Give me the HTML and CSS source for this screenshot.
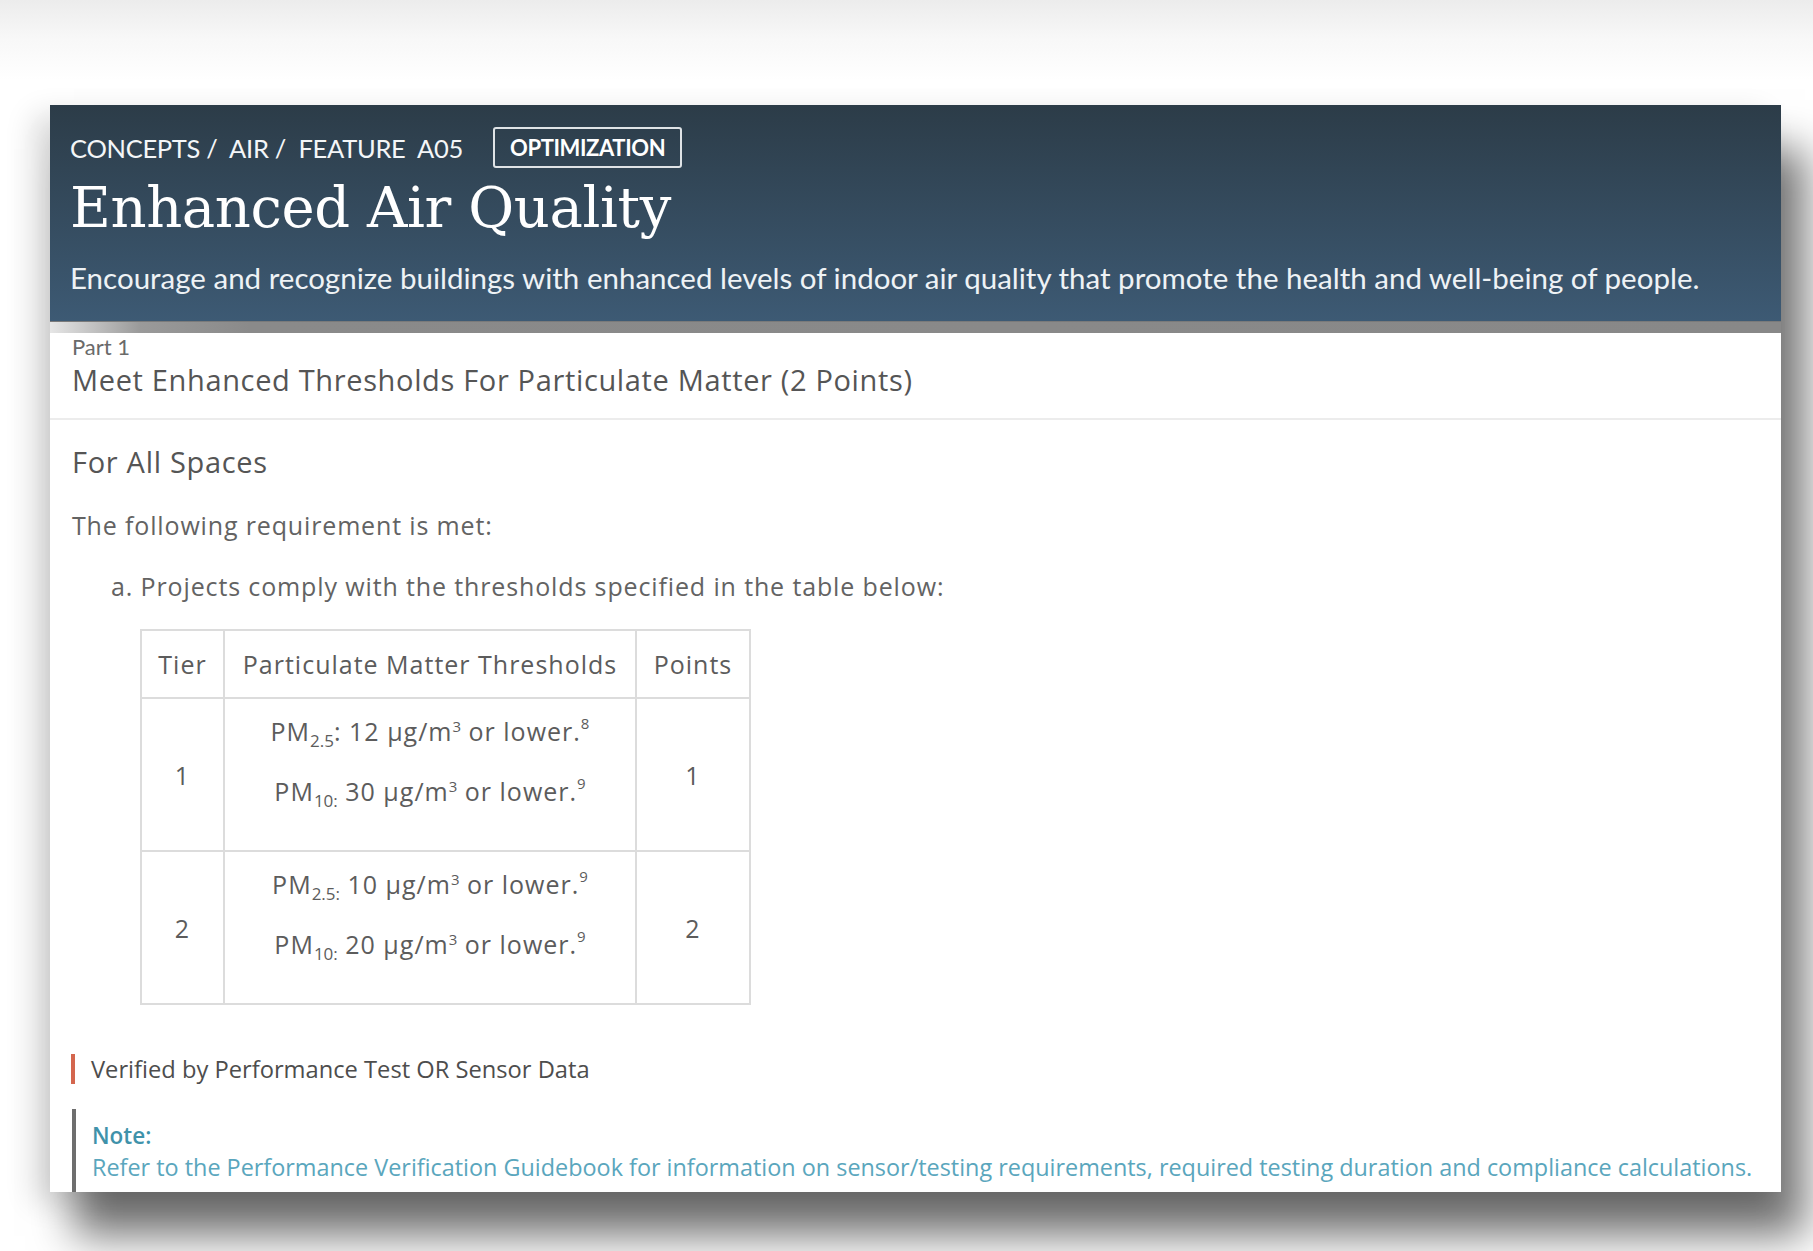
FILE: index.html
```html
<!DOCTYPE html>
<html lang="en">
<head>
<meta charset="utf-8">
<title>Enhanced Air Quality</title>
<link rel="stylesheet" href="styles.css">
</head>
<body>
<div class="page">
  <div class="card">
    <header class="hero">
      <div class="crumbs">
        <span class="crumb-text">CONCEPTS /&nbsp; AIR /&nbsp; FEATURE&nbsp; A05</span>
        <span class="badge">OPTIMIZATION</span>
      </div>
      <h1 class="title">Enhanced Air Quality</h1>
      <p class="intro">Encourage and recognize buildings with enhanced levels of indoor air quality that promote the health and well-being of people.</p>
    </header>
    <div class="band"></div>
    <section class="part">
      <div class="part-label">Part 1</div>
      <h2 class="part-title">Meet Enhanced Thresholds For Particulate Matter (2 Points)</h2>
    </section>
    <section class="body">
      <h3 class="space-title">For All Spaces</h3>
      <p class="req">The following requirement is met:</p>
      <p class="item">a. Projects comply with the thresholds specified in the table below:</p>
      <table class="thr">
        <thead>
          <tr><th class="c-tier">Tier</th><th class="c-pm">Particulate Matter Thresholds</th><th class="c-pts">Points</th></tr>
        </thead>
        <tbody>
          <tr class="r1">
            <td>1</td>
            <td class="pm">
              <p>PM<sub>2.5</sub>: 12 µg/m<sup class="cube">3</sup> or lower.<sup class="fn">8</sup></p>
              <p>PM<sub>10:</sub> 30 µg/m<sup class="cube">3</sup> or lower.<sup class="fn">9</sup></p>
            </td>
            <td>1</td>
          </tr>
          <tr class="r2">
            <td>2</td>
            <td class="pm">
              <p>PM<sub>2.5:</sub> 10 µg/m<sup class="cube">3</sup> or lower.<sup class="fn">9</sup></p>
              <p>PM<sub>10:</sub> 20 µg/m<sup class="cube">3</sup> or lower.<sup class="fn">9</sup></p>
            </td>
            <td>2</td>
          </tr>
        </tbody>
      </table>
      <div class="verified">Verified by Performance Test OR Sensor Data</div>
      <div class="note">
        <div class="note-head">Note:</div>
        <div class="note-text">Refer to the Performance Verification Guidebook for information on sensor/testing requirements, required testing duration and compliance calculations.</div>
      </div>
    </section>
  </div>
</div>
</body>
</html>
```

FILE: styles.css
```css
html, body {
  margin: 0;
  padding: 0;
}
body {
  width: 1813px;
  height: 1251px;
  overflow: hidden;
  background: linear-gradient(#ececec 0px, #f8f8f8 40px, #ffffff 80px);
  font-family: "Open Sans", "Lato", sans-serif;
}
.page {
  padding: 105px 0 0 50px;
}
.card {
  width: 1731px;
  height: 1087px;
  overflow: hidden;
  background: #ffffff;
  box-shadow: 24px 44px 40px rgba(0, 0, 0, 0.55), -16px 10px 28px rgba(0, 0, 0, 0.14);
}
.hero {
  height: 216px;
  box-sizing: border-box;
  padding: 22px 20px 0 20px;
  background: linear-gradient(#2c3c48, #3d5a74);
  color: #ffffff;
  font-family: "Lato", "Open Sans", sans-serif;
}
.crumbs {
  display: flex;
  align-items: center;
  height: 41px;
}
.crumb-text {
  font-size: 25.5px;
  letter-spacing: -0.3px;
  color: #f4f6f8;
}
.badge {
  margin-left: 30px;
  height: 41px;
  box-sizing: border-box;
  padding: 0 15px;
  display: flex;
  align-items: center;
  border: 2px solid #dfe3e6;
  border-radius: 3px;
  font-size: 22px;
  font-weight: 700;
  letter-spacing: -0.4px;
}
.title {
  margin: 7px 0 0 0;
  font-family: "DejaVu Serif", "Liberation Serif", serif;
  font-weight: 400;
  font-size: 56px;
  line-height: 66px;
  letter-spacing: -0.4px;
}
.intro {
  margin: 18px 0 0 0;
  font-size: 29.5px;
  line-height: 38px;
  color: #eef2f5;
}
.band {
  height: 12px;
  background: linear-gradient(90deg, #e6e6e6 0px, #9a9a9a 90px, #8a8a8a 200px, #888888 100%);
  border-top: 1px solid #7a7a7a;
  box-sizing: border-box;
}
.part {
  padding: 0 22px 0 22px;
  height: 87px;
  box-sizing: border-box;
  border-bottom: 2px solid #ececec;
}
.part-label {
  font-family: "Lato", "Open Sans", sans-serif;
  font-size: 22px;
  line-height: 27px;
  color: #6a6a6a;
}
.part-title {
  margin: 0;
  font-size: 29px;
  font-weight: 400;
  line-height: 39px;
  letter-spacing: 0.65px;
  color: #555555;
}
.body {
  padding: 25px 22px 0 22px;
  color: #5c5c5c;
}
.space-title {
  margin: 0;
  font-size: 29px;
  font-weight: 400;
  line-height: 34px;
  letter-spacing: 0.7px;
  color: #555555;
}
.req {
  margin: 31px 0 0 0;
  font-size: 25px;
  line-height: 30px;
  letter-spacing: 0.85px;
  color: #636363;
}
.item {
  margin: 31px 0 0 39px;
  font-size: 25px;
  line-height: 30px;
  letter-spacing: 0.87px;
  color: #636363;
}
.thr {
  margin: 28px 0 0 68px;
  border-collapse: collapse;
  font-size: 25px;
  letter-spacing: 1px;
  color: #5c5c5c;
  text-align: center;
}
.thr th, .thr td {
  border: 2px solid #dcdcdc;
  font-weight: 400;
  vertical-align: middle;
}
.thr th {
  height: 66px;
  padding: 0;
  line-height: 30px;
}
.c-tier { width: 81px; }
.c-pm { width: 410px; }
.c-pts { width: 112px; }
.thr td {
  padding: 0;
  box-sizing: border-box;
}
.r1 td { height: 149px; }
.r2 td { height: 146px; }
.thr td.pm {
  padding: 17px 4px 14px 4px;
  vertical-align: top;
}
.pm p {
  margin: 0 0 30px 0;
  line-height: 30px;
  white-space: nowrap;
}
.pm sub {
  font-size: 17px;
  letter-spacing: 0;
  vertical-align: -6px;
  line-height: 0;
}
.pm sup {
  font-size: 15px;
  letter-spacing: 0;
  line-height: 0;
  vertical-align: 9px;
}
.pm sup.fn {
  vertical-align: 12px;
}
.verified {
  margin: 49px 0 0 -1px;
  padding-left: 16px;
  border-left: 4px solid #d4664e;
  font-size: 23.7px;
  line-height: 30px;
  color: #4d4d4d;
}
.note {
  margin: 25px 0 0 0;
  padding: 13px 0 20px 16px;
  border-left: 4px solid #6e6e6e;
}
.note-head {
  font-size: 22.5px;
  font-weight: 600;
  line-height: 28px;
  color: #3f92aa;
}
.note-text {
  margin-top: 3px;
  font-size: 23.4px;
  line-height: 28px;
  color: #5aa6bd;
}
```
